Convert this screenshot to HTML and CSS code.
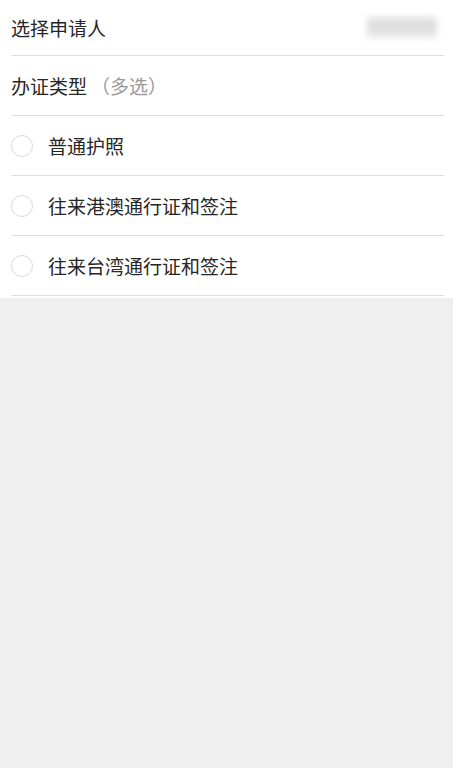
FILE: index.html
```html
<!DOCTYPE html>
<html lang="zh">
<head>
<meta charset="utf-8">
<link rel="stylesheet" href="styles.css">
</head>
<body>
<div class="form">
  <div class="row row-first">
    <span class="label">选择申请人</span>
    <span class="blur-value"></span>
  </div>
  <div class="row">
    <span class="label">办证类型<span class="hint">（多选）</span></span>
  </div>
  <div class="row">
    <span class="radio"></span>
    <span class="label">普通护照</span>
  </div>
  <div class="row">
    <span class="radio"></span>
    <span class="label">往来港澳通行证和签注</span>
  </div>
  <div class="row">
    <span class="radio"></span>
    <span class="label">往来台湾通行证和签注</span>
  </div>
</div>
</body>
</html>
```

FILE: styles.css
```css
html, body {
  margin: 0;
  padding: 0;
  height: 100%;
  background: #efefef;
}
body {
  font-family: "Noto Sans CJK SC", "Noto Sans", sans-serif;
  color: #262626;
}
.form {
  background: #fff;
  padding: 0 9px 2px 11px;
}
.row {
  height: 59px;
  display: flex;
  align-items: center;
  border-bottom: 1px solid #dedede;
  position: relative;
}
.row-first {
  height: 54px;
  padding-bottom: 1px;
}
.label {
  font-size: 19px;
  line-height: 1;
  color: #262626;
}
.hint {
  color: #999;
  margin-left: 4px;
}
.radio {
  width: 20px;
  height: 20px;
  border: 1px solid #d9d9d9;
  border-radius: 50%;
  margin-right: 15px;
  flex: none;
  box-sizing: content-box;
}
.blur-value {
  position: absolute;
  right: 7px;
  top: 16px;
  width: 70px;
  height: 22px;
  background: linear-gradient(#ececec 0, #dadada 45%, #ededed 100%);
  filter: blur(3px);
}
```
